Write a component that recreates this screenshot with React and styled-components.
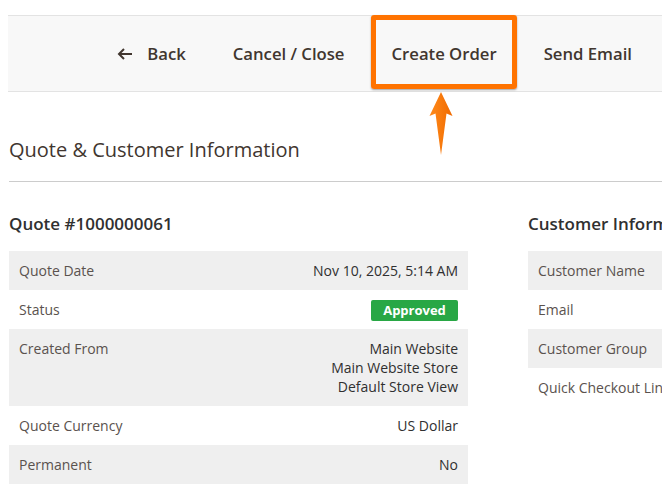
import React from 'react'
import styled, { createGlobalStyle } from 'styled-components'

const Global = createGlobalStyle`
  html, body {
    margin: 0;
    padding: 0;
    background: #fff;
    overflow: hidden;
  }
  body {
    font-family: "Open Sans", "Liberation Sans", sans-serif;
    color: #303030;
  }
`

const Page = styled.div`
  width: 662px;
  height: 496px;
  padding: 15px 0 0 8px;
  box-sizing: border-box;
  overflow: hidden;
`

const Toolbar = styled.div`
  display: flex;
  justify-content: flex-end;
  align-items: flex-start;
  gap: 7px;
  height: 75px;
  padding-right: 10px;
  background: #f8f8f8;
  border-top: 1px solid #e3e3e3;
  border-bottom: 1px solid #e3e3e3;
`

const Button = styled.button`
  position: relative;
  display: flex;
  align-items: center;
  gap: 14px;
  height: 74px;
  margin-top: -1px;
  padding: 3px 15px 0;
  box-sizing: border-box;
  background: transparent;
  border: 5px solid ${p => (p.$highlight ? '#ff7300' : 'transparent')};
  border-radius: 3px;
  box-shadow: ${p => (p.$highlight ? '0 1px 2px rgba(0,0,0,0.35)' : 'none')};
  font-family: "Open Sans", "Liberation Sans", sans-serif;
  font-size: 16.7px;
  font-weight: 600;
  color: #41362f;
  cursor: pointer;
`

const Pointer = styled.svg`
  position: absolute;
  left: 52px;
  top: 71px;
`

const Section = styled.div`
  padding-left: 1px;
`

const SectionTitle = styled.h2`
  margin: 0;
  padding: 44px 0 17px;
  font-size: 20px;
  font-weight: 400;
  color: #41362f;
  line-height: 28px;
  border-bottom: 1px solid #cccccc;
`

const Columns = styled.div`
  display: grid;
  grid-template-columns: 459px 459px;
  gap: 60px;
  padding-top: 30px;
`

const BlockTitle = styled.h3`
  margin: 0 0 15px;
  font-size: 17px;
  font-weight: 600;
  color: #303030;
  line-height: 24px;
  white-space: nowrap;
`

const Table = styled.div`
  display: flex;
  flex-direction: column;
  font-size: 14px;
  line-height: 19px;
`

const Row = styled.div`
  display: flex;
  justify-content: space-between;
  align-items: flex-start;
  padding: 10px 10px;
  background: ${p => (p.$odd ? '#efefef' : '#ffffff')};
`

const Label = styled.div`
  color: #5a524e;
  white-space: nowrap;
`

const Value = styled.div`
  display: flex;
  flex-direction: column;
  align-items: flex-end;
  color: #303030;
  text-align: right;
  white-space: nowrap;
`

const Badge = styled.span`
  display: block;
  width: 87px;
  height: 21px;
  margin-bottom: -2px;
  border-radius: 2px;
  background: #28a745;
  color: #fff;
  font-size: 13px;
  font-weight: 700;
  line-height: 21px;
  text-align: center;
`

const BackArrow = () => (
  <svg width="16" height="14" viewBox="0 0 16 14">
    <path d="M15 7H2M7 2L2 7l5 5" fill="none" stroke="#41362f" strokeWidth="2" />
  </svg>
)

const quoteRows = [
  { label: 'Quote Date', value: 'Nov 10, 2025, 5:14 AM' },
  { label: 'Status', badge: 'Approved' },
  { label: 'Created From', value: ['Main Website', 'Main Website Store', 'Default Store View'] },
  { label: 'Quote Currency', value: 'US Dollar' },
  { label: 'Permanent', value: 'No' },
]

const customerRows = ['Customer Name', 'Email', 'Customer Group', 'Quick Checkout Link']

const App = () => (
  <Page>
    <Global />
    <Toolbar>
      <Button><BackArrow />Back</Button>
      <Button>Cancel / Close</Button>
      <Button $highlight>
        Create Order
        <Pointer width="26" height="66" viewBox="0 0 26 66">
          <defs>
            <linearGradient id="arrowFill" x1="0" x2="1" y1="0" y2="0">
              <stop offset="0" stopColor="#ff8a1a" />
              <stop offset="1" stopColor="#f06a00" />
            </linearGradient>
          </defs>
          <path d="M13 1 L24.5 25 L18.5 22.5 L13 64 L7.5 22.5 L1.5 25 Z" fill="url(#arrowFill)" />
        </Pointer>
      </Button>
      <Button>Send Email</Button>
    </Toolbar>

    <Section>
      <SectionTitle>Quote &amp; Customer Information</SectionTitle>
      <Columns>
        <div>
          <BlockTitle>Quote #1000000061</BlockTitle>
          <Table>
            {quoteRows.map((r, i) => (
              <Row key={r.label} $odd={i % 2 === 0}>
                <Label>{r.label}</Label>
                <Value>
                  {r.badge && <Badge>{r.badge}</Badge>}
                  {Array.isArray(r.value)
                    ? r.value.map(v => <div key={v}>{v}</div>)
                    : r.value}
                </Value>
              </Row>
            ))}
          </Table>
        </div>
        <div>
          <BlockTitle>Customer Information</BlockTitle>
          <Table>
            {customerRows.map((label, i) => (
              <Row key={label} $odd={i % 2 === 0}>
                <Label>{label}</Label>
              </Row>
            ))}
          </Table>
        </div>
      </Columns>
    </Section>
  </Page>
)

export default App
